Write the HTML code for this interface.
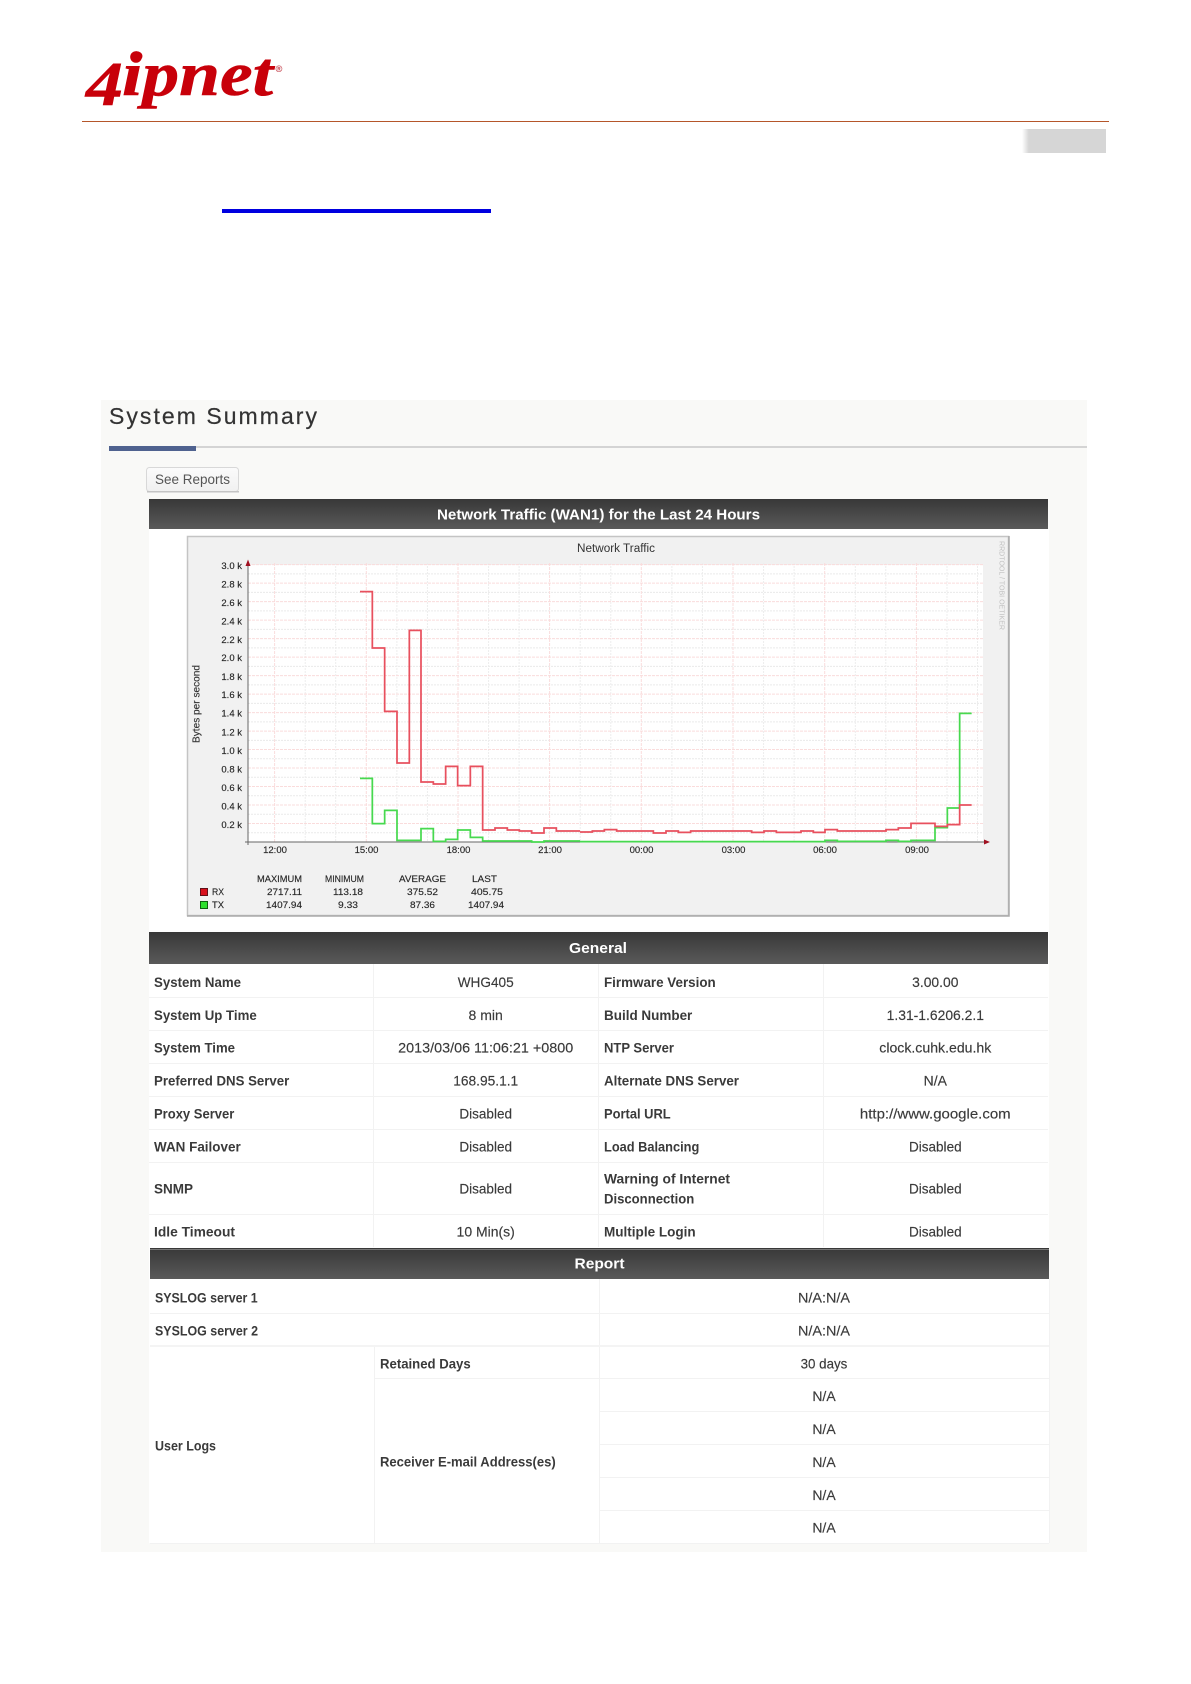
<!DOCTYPE html>
<html lang="en"><head><meta charset="utf-8"><title>System Summary</title>
<style>
html,body{margin:0;padding:0;background:#fff}
svg{display:block;filter:blur(.3px)}
text{font-family:"Liberation Sans",sans-serif}
.l{font-size:14px;font-weight:700;fill:#3a3a3a}
.v{font-size:14px;fill:#3a3a3a;text-anchor:middle;stroke:#3a3a3a;stroke-width:.15px}
.h{font-size:15px;font-weight:700;fill:#fff;text-anchor:middle}
.c{font-size:9.5px;fill:#222;stroke:#333;stroke-width:.15px}
.m{text-anchor:middle}
.e{text-anchor:end}
</style></head><body>
<svg xmlns="http://www.w3.org/2000/svg" width="1191" height="1684" viewBox="0 0 1191 1684">
<defs>
<linearGradient id="hd" x1="0" y1="0" x2="0" y2="1"><stop offset="0" stop-color="#383838"/><stop offset="1" stop-color="#5a5a5a"/></linearGradient>
<linearGradient id="gb" x1="0" y1="0" x2="1" y2="0"><stop offset="0" stop-color="#fff"/><stop offset=".08" stop-color="#d6d6d6"/><stop offset="1" stop-color="#d6d6d6"/></linearGradient>
<linearGradient id="bt" x1="0" y1="0" x2="0" y2="1"><stop offset="0" stop-color="#fbfbfb"/><stop offset="1" stop-color="#f0f0f0"/></linearGradient>
</defs>
<rect width="1191" height="1684" fill="#fff"/>

<!-- logo -->
<g fill="#c8000a" stroke="#c8000a" stroke-width=".6" font-weight="700" font-style="italic">
<text x="86" y="105" font-size="62" textLength="37" lengthAdjust="spacingAndGlyphs" style="font-family:'Liberation Serif',serif">4</text>
<text x="122" y="95" font-size="62" textLength="151" lengthAdjust="spacingAndGlyphs" style="font-family:'Liberation Serif',serif">ipnet</text>
<circle cx="136" cy="57" r="5.5"/>
</g>
<text x="279" y="72" font-size="9" fill="#c8505a" stroke="#c8505a" stroke-width=".2" text-anchor="middle">®</text>
<rect x="82" y="121" width="1027" height="1" fill="#b5562a"/>
<rect x="1022" y="129" width="84" height="24" fill="url(#gb)"/>
<rect x="222" y="209" width="269" height="4" fill="#0000e0"/>

<!-- panel -->
<rect x="101" y="400" width="986" height="1152" fill="#f9f9f7"/>
<text x="109" y="424" font-size="23" fill="#333" stroke="#333" stroke-width=".2" textLength="208" lengthAdjust="spacing">System Summary</text>
<rect x="196" y="446" width="891" height="2" fill="#d4d4d4"/>
<rect x="109" y="446" width="87" height="5" fill="#4f628f"/>
<rect x="146.5" y="467.5" width="92" height="24" rx="3" fill="url(#bt)" stroke="#d8d8d8"/>
<rect x="147" y="491" width="92" height="1.5" fill="#c4c4c4"/>
<text x="155" y="484" font-size="14" fill="#555" textLength="75" lengthAdjust="spacingAndGlyphs">See Reports</text>

<!-- white content -->
<rect x="149" y="529" width="900" height="1014" fill="#fff"/>
<rect x="149" y="499" width="899" height="30" fill="url(#hd)"/>
<text class="h" x="598.5" y="519.5" textLength="323" lengthAdjust="spacingAndGlyphs">Network Traffic (WAN1) for the Last 24 Hours</text>

<!-- chart -->
<rect x="187.5" y="536.5" width="821" height="379" fill="#f1f1f1" stroke="#c4c4c4" stroke-width="1.5"/>
<path d="M1009 536V916H187" fill="none" stroke="#aaa" stroke-width="1.5"/>
<rect x="248" y="565" width="735" height="277" fill="#fff"/>
<path fill="none" stroke="#eaeaea" stroke-dasharray="2 1" d="M248 832.76H983M248 814.27H983M248 795.78H983M248 777.29H983M248 758.8H983M248 740.32H983M248 721.83H983M248 703.34H983M248 684.85H983M248 666.36H983M248 647.88H983M248 629.39H983M248 610.9H983M248 592.41H983M248 573.92H983"/>
<path fill="none" stroke="#ededed" stroke-dasharray="2 1" d="M305.2 563V842M335.7 563V842M396.9 563V842M427.4 563V842M488.6 563V842M519.1 563V842M580.2 563V842M610.8 563V842M671.9 563V842M702.4 563V842M763.6 563V842M794.1 563V842M855.3 563V842M885.8 563V842M947 563V842M977.5 563V842"/>
<path fill="none" stroke="#fadcdc" stroke-dasharray="3 1" d="M248 823.51H983M248 805.02H983M248 786.54H983M248 768.05H983M248 749.56H983M248 731.07H983M248 712.58H983M248 694.1H983M248 675.61H983M248 657.12H983M248 638.63H983M248 620.14H983M248 601.66H983M248 583.17H983M248 564.68H983"/>
<path fill="none" stroke="#fadcdc" stroke-dasharray="3 1" d="M274.6 563V842M366.3 563V842M458 563V842M549.6 563V842M641.3 563V842M733 563V842M824.7 563V842M916.4 563V842"/>
<path d="M248 565V845M245 842H986" fill="none" stroke="#666" stroke-width="1"/>
<path d="M245.5 566L248 559.5L250.5 566ZM984 839.5L990 842L984 844.5Z" fill="#a01020"/>

<g fill="none" stroke-width="5.2" stroke-linejoin="miter">
<g transform="translate(180 530) scale(.33333)">
<path stroke="#47d94f" d="M540 745H577V881H614V841H651V931H723V896H760V934H797V928H833V900H871V922H908V933H1055V936H1092V933H1200"/>
<path stroke="#e8505e" d="M540 185H577V354H614V544H651V699H688V301H723V756H760V762H797V709H833V767H871V709H908V900H945V894H982V900H1018V903H1055V909H1092V894H1129V903H1200"/>
</g>
<g transform="translate(580 530) scale(.33333)">
<path stroke="#47d94f" d="M0 935H735V931H772V934H918V931H955V934H993V931H1065V893H1102V834H1139V550H1175"/>
<path stroke="#e8505e" d="M0 906H37V903H73V899H110V903H220V909H258V903H295V907H332V903H515V907H552V903H589V907H663V903H700V907H735V899H772V903H918V899H955V894H993V880H1065V889H1102V884H1139V825H1175"/>
</g>
</g>

<text x="616" y="552" font-size="11.5" fill="#333" text-anchor="middle" textLength="78" lengthAdjust="spacingAndGlyphs">Network Traffic</text>
<text transform="translate(999.5 541) rotate(90)" font-size="7.5" fill="#c0c0c0" textLength="89" lengthAdjust="spacingAndGlyphs">RRDTOOL / TOBI OETIKER</text>
<text transform="translate(199.5 743) rotate(-90)" font-size="10" fill="#333" stroke="#333" stroke-width=".15" textLength="78" lengthAdjust="spacingAndGlyphs">Bytes per second</text>

<g class="c">
<text class="c e" x="242" y="569">3.0 k</text>
<text class="c e" x="242" y="587.5">2.8 k</text>
<text class="c e" x="242" y="606">2.6 k</text>
<text class="c e" x="242" y="624.5">2.4 k</text>
<text class="c e" x="242" y="643">2.2 k</text>
<text class="c e" x="242" y="661">2.0 k</text>
<text class="c e" x="242" y="680">1.8 k</text>
<text class="c e" x="242" y="698">1.6 k</text>
<text class="c e" x="242" y="716.5">1.4 k</text>
<text class="c e" x="242" y="735.5">1.2 k</text>
<text class="c e" x="242" y="754">1.0 k</text>
<text class="c e" x="242" y="772.5">0.8 k</text>
<text class="c e" x="242" y="791">0.6 k</text>
<text class="c e" x="242" y="809.5">0.4 k</text>
<text class="c e" x="242" y="828">0.2 k</text>
<text class="c m" x="275" y="853">12:00</text>
<text class="c m" x="366.5" y="853">15:00</text>
<text class="c m" x="458.5" y="853">18:00</text>
<text class="c m" x="550" y="853">21:00</text>
<text class="c m" x="641.5" y="853">00:00</text>
<text class="c m" x="733.5" y="853">03:00</text>
<text class="c m" x="825" y="853">06:00</text>
<text class="c m" x="917" y="853">09:00</text>
<text class="c" x="257" y="882" textLength="45" lengthAdjust="spacingAndGlyphs">MAXIMUM</text>
<text class="c" x="325" y="882" textLength="39" lengthAdjust="spacingAndGlyphs">MINIMUM</text>
<text class="c" x="399" y="882" textLength="47" lengthAdjust="spacingAndGlyphs">AVERAGE</text>
<text class="c" x="472" y="882" textLength="25" lengthAdjust="spacingAndGlyphs">LAST</text>
<text class="c" x="212" y="895" textLength="12" lengthAdjust="spacingAndGlyphs">RX</text>
<text class="c" x="267" y="895" textLength="35" lengthAdjust="spacingAndGlyphs">2717.11</text>
<text class="c" x="333" y="895" textLength="30" lengthAdjust="spacingAndGlyphs">113.18</text>
<text class="c" x="407" y="895" textLength="31" lengthAdjust="spacingAndGlyphs">375.52</text>
<text class="c" x="471" y="895" textLength="32" lengthAdjust="spacingAndGlyphs">405.75</text>
<text class="c" x="212" y="908" textLength="12" lengthAdjust="spacingAndGlyphs">TX</text>
<text class="c" x="266" y="908" textLength="36" lengthAdjust="spacingAndGlyphs">1407.94</text>
<text class="c" x="338" y="908" textLength="20" lengthAdjust="spacingAndGlyphs">9.33</text>
<text class="c" x="410" y="908" textLength="25" lengthAdjust="spacingAndGlyphs">87.36</text>
<text class="c" x="468" y="908" textLength="36" lengthAdjust="spacingAndGlyphs">1407.94</text>
</g>
<rect x="200.5" y="888.5" width="7" height="7" fill="#d8101c" stroke="#601018"/>
<rect x="200.5" y="901.5" width="7" height="7" fill="#2ee02e" stroke="#106010"/>

<!-- General -->
<rect x="149" y="932" width="899" height="32" fill="url(#hd)"/>
<text class="h" x="598" y="953" textLength="58" lengthAdjust="spacingAndGlyphs">General</text>
<path fill="none" stroke="#f2f2f2" d="M149 997.5H1048M149 1030.5H1048M149 1063.5H1048M149 1096.5H1048M149 1129.5H1048M149 1162.5H1048M149 1214.5H1048M373.5 964V1247M598.5 964V1247M823.5 964V1247"/>

<text class="l" x="154" y="987" textLength="87" lengthAdjust="spacingAndGlyphs">System Name</text>
<text class="l" x="154" y="1020" textLength="102.7" lengthAdjust="spacingAndGlyphs">System Up Time</text>
<text class="l" x="154" y="1052.7" textLength="81" lengthAdjust="spacingAndGlyphs">System Time</text>
<text class="l" x="154" y="1085.7" textLength="135.3" lengthAdjust="spacingAndGlyphs">Preferred DNS Server</text>
<text class="l" x="154" y="1118.3" textLength="80.3" lengthAdjust="spacingAndGlyphs">Proxy Server</text>
<text class="l" x="154" y="1151.3" textLength="86.7" lengthAdjust="spacingAndGlyphs">WAN Failover</text>
<text class="l" x="154" y="1193.3" textLength="39" lengthAdjust="spacingAndGlyphs">SNMP</text>
<text class="l" x="154" y="1236.7" textLength="81" lengthAdjust="spacingAndGlyphs">Idle Timeout</text>

<text class="v" x="485.7" y="987" textLength="56" lengthAdjust="spacingAndGlyphs">WHG405</text>
<text class="v" x="485.7" y="1020" textLength="34.3" lengthAdjust="spacingAndGlyphs">8 min</text>
<text class="v" x="485.7" y="1052.7" textLength="175" lengthAdjust="spacingAndGlyphs">2013/03/06 11:06:21 +0800</text>
<text class="v" x="485.7" y="1085.7" textLength="65" lengthAdjust="spacingAndGlyphs">168.95.1.1</text>
<text class="v" x="485.7" y="1118.3" textLength="52.7" lengthAdjust="spacingAndGlyphs">Disabled</text>
<text class="v" x="485.7" y="1151.3" textLength="52.7" lengthAdjust="spacingAndGlyphs">Disabled</text>
<text class="v" x="485.7" y="1193.3" textLength="52.7" lengthAdjust="spacingAndGlyphs">Disabled</text>
<text class="v" x="485.7" y="1236.7" textLength="58.3" lengthAdjust="spacingAndGlyphs">10 Min(s)</text>

<text class="l" x="604" y="987" textLength="111.7" lengthAdjust="spacingAndGlyphs">Firmware Version</text>
<text class="l" x="604" y="1020" textLength="88.3" lengthAdjust="spacingAndGlyphs">Build Number</text>
<text class="l" x="604" y="1052.7" textLength="70" lengthAdjust="spacingAndGlyphs">NTP Server</text>
<text class="l" x="604" y="1085.7" textLength="135" lengthAdjust="spacingAndGlyphs">Alternate DNS Server</text>
<text class="l" x="604" y="1118.3" textLength="66.7" lengthAdjust="spacingAndGlyphs">Portal URL</text>
<text class="l" x="604" y="1151.3" textLength="95.3" lengthAdjust="spacingAndGlyphs">Load Balancing</text>
<text class="l" x="604" y="1183.3" textLength="126" lengthAdjust="spacingAndGlyphs">Warning of Internet</text>
<text class="l" x="604" y="1203.7" textLength="90.3" lengthAdjust="spacingAndGlyphs">Disconnection</text>
<text class="l" x="604" y="1236.7" textLength="91.7" lengthAdjust="spacingAndGlyphs">Multiple Login</text>

<text class="v" x="935.3" y="987" textLength="46.3" lengthAdjust="spacingAndGlyphs">3.00.00</text>
<text class="v" x="935.3" y="1020" textLength="97.3" lengthAdjust="spacingAndGlyphs">1.31-1.6206.2.1</text>
<text class="v" x="935.3" y="1052.7" textLength="112" lengthAdjust="spacingAndGlyphs">clock.cuhk.edu.hk</text>
<text class="v" x="935.3" y="1085.7" textLength="23.3" lengthAdjust="spacingAndGlyphs">N/A</text>
<text class="v" x="935.3" y="1118.3" textLength="150.7" lengthAdjust="spacingAndGlyphs">http://www.google.com</text>
<text class="v" x="935.3" y="1151.3" textLength="52.7" lengthAdjust="spacingAndGlyphs">Disabled</text>
<text class="v" x="935.3" y="1193.3" textLength="52.7" lengthAdjust="spacingAndGlyphs">Disabled</text>
<text class="v" x="935.3" y="1236.7" textLength="52.7" lengthAdjust="spacingAndGlyphs">Disabled</text>

<!-- Report -->
<rect x="150" y="1248" width="899" height="31" fill="url(#hd)"/>
<rect x="150" y="1249" width="899" height="1" fill="#777"/>
<text class="h" x="599.5" y="1268.5" textLength="50" lengthAdjust="spacingAndGlyphs">Report</text>
<path fill="none" stroke="#f2f2f2" d="M150 1313.5H1049M599.5 1279V1543M374.5 1346V1543M599.5 1411.5H1049M599.5 1444.5H1049M599.5 1477.5H1049M599.5 1510.5H1049M374 1378.5H1049M150 1543.5H1049M1049.5 1279V1543"/>
<rect x="150" y="1345" width="899" height="2" fill="#f4f4f4"/>

<text class="l" x="155" y="1302.3" textLength="102.7" lengthAdjust="spacingAndGlyphs">SYSLOG server 1</text>
<text class="l" x="155" y="1335.3" textLength="103" lengthAdjust="spacingAndGlyphs">SYSLOG server 2</text>
<text class="l" x="155" y="1450.7" textLength="61" lengthAdjust="spacingAndGlyphs">User Logs</text>
<text class="l" x="380" y="1368.3" textLength="90.7" lengthAdjust="spacingAndGlyphs">Retained Days</text>
<text class="l" x="380" y="1466.7" textLength="175.7" lengthAdjust="spacingAndGlyphs">Receiver E-mail Address(es)</text>

<text class="v" x="824" y="1302.3" textLength="52" lengthAdjust="spacingAndGlyphs">N/A:N/A</text>
<text class="v" x="824" y="1335.3" textLength="52" lengthAdjust="spacingAndGlyphs">N/A:N/A</text>
<text class="v" x="824" y="1368.3" textLength="46.7" lengthAdjust="spacingAndGlyphs">30 days</text>
<text class="v" x="824" y="1401" textLength="23.3" lengthAdjust="spacingAndGlyphs">N/A</text>
<text class="v" x="824" y="1434" textLength="23.3" lengthAdjust="spacingAndGlyphs">N/A</text>
<text class="v" x="824" y="1467" textLength="23.3" lengthAdjust="spacingAndGlyphs">N/A</text>
<text class="v" x="824" y="1500" textLength="23.3" lengthAdjust="spacingAndGlyphs">N/A</text>
<text class="v" x="824" y="1532.7" textLength="23.3" lengthAdjust="spacingAndGlyphs">N/A</text>
</svg>
</body></html>
